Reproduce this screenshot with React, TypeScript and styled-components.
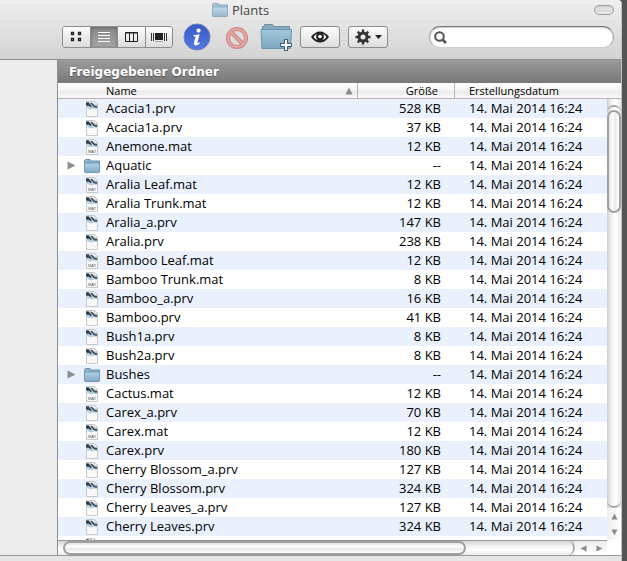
import React from 'react';
import styled, { createGlobalStyle, css } from 'styled-components';

const GlobalStyle = createGlobalStyle`
  * { box-sizing: border-box; }
  body { margin: 0; background: #555; }
  body, button, input { font-family: 'Open Sans', 'Noto Sans', sans-serif; }
`;

const Window = styled.div`
  display: flex;
  flex-direction: column;
  height: 100vh;
  margin-right: 5px;
  background: #ebebeb;
  border-right: 1px solid #c4c4c4;
  border-top-right-radius: 4px;
  overflow: hidden;
  color: #000;
`;

const Header = styled.header`
  flex: none;
  padding: 0 7px 7px 0;
  background: linear-gradient(#efefef, #d3d3d3);
  border-bottom: 1px solid #8e8e8e;
`;

const TitleBar = styled.div`
  display: flex;
  align-items: center;
  justify-content: space-between;
  height: 20px;
  padding-left: 212px;
`;

const Title = styled.h1`
  display: flex;
  align-items: center;
  gap: 4px;
  margin: 0;
  font-size: 13px;
  line-height: 18px;
  font-weight: 400;
  color: #444;
  svg { opacity: 0.75; }
`;

const ToolbarPill = styled.button`
  width: 20px;
  height: 10px;
  padding: 0;
  border: 1px solid #9a9a9a;
  border-radius: 5px;
  background: linear-gradient(#d2d2d2, #e4e4e4 50%, #d8d8d8 55%, #eee);
`;

const Toolbar = styled.div`
  display: flex;
  align-items: center;
  height: 32px;
  padding: 2px 0 0 62px;
`;

const buttonFace = css`
  display: flex;
  align-items: center;
  justify-content: center;
  padding: 0;
  color: #222;
  background: linear-gradient(#fcfcfc, #dcdcdc);
`;

const Segments = styled.div`
  display: flex;
  flex: none;
  width: 111px;
  height: 22px;
  border: 1px solid #8d8d8d;
  border-radius: 3px;
  overflow: hidden;
  margin-right: 10px;
`;

const Segment = styled.button<{ $active?: boolean }>`
  ${buttonFace}
  flex: 1;
  border: 0;
  & + & { border-left: 1px solid #8d8d8d; }
  ${(p) => p.$active && css`
    color: #fff;
    background: linear-gradient(#868686, #a4a4a4);
    box-shadow: inset 0 1px 3px #666;
  `}
`;

const IconButton = styled.button<{ $gap: number }>`
  display: flex;
  flex: none;
  padding: 0;
  border: 0;
  background: none;
  margin-right: ${(p) => p.$gap}px;
`;

const PushButton = styled.button`
  ${buttonFace}
  flex: none;
  gap: 4px;
  width: 40px;
  height: 22px;
  margin-right: 8px;
  border: 1px solid #8d8d8d;
  border-radius: 3px;
`;

const Search = styled.label`
  display: flex;
  align-items: center;
  flex: 1;
  gap: 4px;
  min-width: 0;
  height: 22px;
  margin-left: 33px;
  padding: 0 8px 0 4px;
  background: #fff;
  border: 1px solid #aaa;
  border-top-color: #777;
  border-bottom-color: #d0d0d0;
  border-radius: 11px;
  box-shadow: inset 0 1px 1px #ccc;
`;

const SearchInput = styled.input`
  flex: 1;
  width: 0;
  min-width: 0;
  border: 0;
  outline: 0;
  background: none;
  font-size: 12px;
`;

const Body = styled.div`
  display: flex;
  flex: 1;
  min-height: 0;
  border-bottom: 1px solid #999;
`;

const Sidebar = styled.aside`
  flex: none;
  width: 58px;
  background: #ececec;
  border-right: 1px solid #8f8f8f;
`;

const Main = styled.main`
  display: flex;
  flex-direction: column;
  flex: 1;
  min-width: 0;
`;

const Banner = styled.h2`
  flex: none;
  margin: 0;
  padding: 1px 11px 0;
  font-family: 'DejaVu Sans', 'Noto Sans', sans-serif;
  font-size: 12px;
  line-height: 22px;
  font-weight: 700;
  color: #fff;
  text-shadow: 0 1px 1px #555;
  background: linear-gradient(#9a9a9a, #787878);
`;

const Listing = styled.div`
  display: grid;
  flex: 1;
  min-height: 0;
  grid-template-columns: minmax(0, 1fr) 14px;
  grid-template-rows: minmax(0, 1fr) 15px;
`;

const TableArea = styled.div`
  overflow: hidden;
  background: #fff;
`;

const Table = styled.table`
  width: 100%;
  table-layout: fixed;
  border-collapse: separate;
  border-spacing: 0;
  font-size: 13px;
  line-height: 19px;
`;

const NameCol = styled.col``;
const SizeCol = styled.col`width: 97px;`;
const DateCol = styled.col`width: 153px;`;

const headFace = css`
  height: 16px;
  background: linear-gradient(#fff, #f4f4f4 50%, #eaeaea 55%, #fafafa);
  border-bottom: 1px solid #b4b4b4;
`;

const Th = styled.th<{ $align?: 'right'; $left: number; $right: number }>`
  ${headFace}
  padding: 0 ${(p) => p.$right}px 0 ${(p) => p.$left}px;
  font-size: 11px;
  line-height: 15px;
  font-weight: 400;
  text-align: ${(p) => p.$align ?? 'left'};
  & + & { border-left: 1px solid #b4b4b4; }
`;

const ThInner = styled.div`
  display: flex;
  align-items: center;
  justify-content: space-between;
`;

const HeadFiller = styled.div`
  flex: none;
  ${headFace}
`;

const Row = styled.tr`
  &:nth-child(odd) { background: #eaf1fd; }
`;

const Td = styled.td`
  height: 19px;
  padding: 0 0 0 15px;
  white-space: nowrap;
`;

const NameTd = styled(Td)`padding: 0 0 0 8px;`;
const SizeTd = styled(Td)`
  padding: 0 13px 0 0;
  text-align: right;
`;

const NameCell = styled.div`
  display: grid;
  grid-template-columns: 10px 16px 1fr;
  column-gap: 8px;
  align-items: center;
  justify-items: center;
  height: 19px;
`;

const FileName = styled.span`
  justify-self: start;
  margin-left: -2px;
`;

const Disclosure = styled.button`
  display: flex;
  padding: 0;
  border: 0;
  background: none;
`;

const VBar = styled.div`
  display: flex;
  flex-direction: column;
  min-height: 0;
`;

const VTrack = styled.div`
  flex: 1;
  min-height: 0;
  padding-top: 6px;
  background: linear-gradient(90deg, #cfcfcf, #f0f0f0 30%, #fff 60%, #e8e8e8);
`;

const VWell = styled.div`
  height: 100%;
  border: 0 solid #aaa;
  border-top: 2px solid #aaa;
  border-bottom: 2px solid #aaa;
  border-radius: 7px;
  padding-top: 3px;
`;

const VThumb = styled.div`
  height: 103px;
  border: 2px solid #a0a0a0;
  border-radius: 7px;
  background: linear-gradient(90deg, #e2e2e2, #fff 35%, #e9e9e9 60%, #fff);
`;

const VArrows = styled.div`
  display: flex;
  flex: none;
  flex-direction: column;
  background: linear-gradient(90deg, #eee, #fff);
`;

const HBar = styled.div`
  display: flex;
  border-top: 1px solid #999;
  background: linear-gradient(#d4d4d4, #f3f3f3 35%, #fff 65%, #ececec);
`;

const HWell = styled.div`
  flex: 1;
  margin-left: 5px;
  border-right: 2px solid #aaa;
  border-radius: 7px;
`;

const HThumb = styled.div`
  width: 79%;
  height: 14px;
  border: 2px solid #a0a0a0;
  border-radius: 7px;
  background: linear-gradient(#e4e4e4, #fff 35%, #e9e9e9 60%, #fff);
`;

const HArrows = styled.div`
  display: flex;
  flex: none;
  background: linear-gradient(#eee, #fff);
`;

const Arrow = styled.button<{ $w: number; $h: number }>`
  display: flex;
  align-items: center;
  justify-content: center;
  width: ${(p) => p.$w}px;
  height: ${(p) => p.$h}px;
  padding: 0;
  border: 0;
  background: none;
`;

const Corner = styled.div`background: #fff;`;

const Footer = styled.footer`
  flex: none;
  height: 5px;
  background: #e6e6e6;
`;

type Direction = 'up' | 'down' | 'left' | 'right';
const TRIANGLES: Record<Direction, string> = {
  up: 'M4 0.5L7.5 7.5H0.5Z',
  down: 'M4 7.5L0.5 0.5H7.5Z',
  left: 'M0.5 4L7.5 0.5V7.5Z',
  right: 'M7.5 4L0.5 0.5V7.5Z',
};

function Triangle({ dir, size = 8 }: { dir: Direction; size?: number }) {
  return (
    <svg width={size} height={size} viewBox="0 0 8 8" aria-hidden="true">
      <path d={TRIANGLES[dir]} fill="#8c8c8c" />
    </svg>
  );
}

function FolderIcon() {
  return (
    <svg width="16" height="14" viewBox="0 0 16 14" aria-hidden="true">
      <defs>
        <linearGradient id="folder" x1="0" y1="0" x2="0" y2="1">
          <stop offset="0" stopColor="#b4d3e6" />
          <stop offset="1" stopColor="#7fa9c6" />
        </linearGradient>
      </defs>
      <path d="M0.5 12.5V1.5L1.5 0.5H6L7 2H15.5V12.5Z" fill="#8fb4cc" stroke="#6c93ae" />
      <path d="M0.5 4H15.5V12.5L15 13.5H1L0.5 12.5Z" fill="url(#folder)" stroke="#7099b5" />
    </svg>
  );
}

function FileIcon({ material }: { material: boolean }) {
  return (
    <svg width="12" height="16" viewBox="0 0 12 16" aria-hidden="true">
      <path d="M0.5 0.5H8.5L11.5 3.5V15.5H0.5Z" fill="#f9f9f9" stroke="#c9c9c9" />
      <path d="M1 4L4 5L7 6L11 5V8L8 7.5L5 8.5L1 7Z" fill="#b7cedb" />
      <path d="M0 1.5L2.5 1.2L4.5 3.5L6 5.5L4.5 6L3 4.8L1.5 5L0 4Z" fill="#2a3f4f" />
      <path d="M4 1.5L6.5 2L8.5 4.5L11 4.8L11.5 6.5L9.5 6.8L7.5 6L6 4.5Z" fill="#3a5262" />
      <path d="M8.5 0.5V3.5H11.5Z" fill="#fff" stroke="#bbb" strokeWidth="0.6" />
      {material && (
        <text x="6" y="14" fontSize="4" fontFamily="Liberation Sans, sans-serif" fontWeight="400" textAnchor="middle" fill="#555">MAT</text>
      )}
    </svg>
  );
}

function GridIcon() {
  return (
    <svg width="12" height="12" viewBox="0 0 12 12" fill="none" stroke="currentColor" aria-hidden="true">
      <path d="M1.5 1.5h2v2h-2zM8.5 1.5h2v2h-2zM1.5 7.5h2v2h-2zM8.5 7.5h2v2h-2z" strokeWidth="1.3" />
    </svg>
  );
}

function ListIcon() {
  return (
    <svg width="12" height="12" viewBox="0 0 12 12" stroke="currentColor" aria-hidden="true">
      <path d="M0 1.5H12M0 4.5H12M0 7.5H12M0 10.5H12" />
    </svg>
  );
}

function ColumnsIcon() {
  return (
    <svg width="13" height="11" viewBox="0 0 13 11" fill="none" stroke="currentColor" aria-hidden="true">
      <path d="M0.5 0.5H12.5V9.5H0.5ZM4.5 0V10M8.5 0V10M0 1H13" />
    </svg>
  );
}

function CoverIcon() {
  return (
    <svg width="16" height="10" viewBox="0 0 16 10" aria-hidden="true">
      <path d="M0.5 1V9M2.5 1V9M13.5 1V9M15.5 1V9" stroke="#333" />
      <rect x="4" y="1" width="8" height="7" fill="#222" />
      <path d="M4 9.5H12" stroke="#aaa" />
    </svg>
  );
}

function InfoIcon() {
  return (
    <svg width="28" height="28" viewBox="0 0 28 28" aria-hidden="true">
      <defs>
        <linearGradient id="info" x1="0" y1="0" x2="0" y2="1">
          <stop offset="0" stopColor="#3659c6" />
          <stop offset="1" stopColor="#5778e0" />
        </linearGradient>
      </defs>
      <circle cx="14" cy="14" r="13" fill="url(#info)" stroke="#6b80c4" />
      <circle cx="15.6" cy="7.6" r="2.1" fill="#fff" />
      <path d="M10.5 12.2L16.6 11.2L14.4 19.6Q14.2 20.8 16.8 19.2L17.2 20Q14.8 22.6 12.4 22.4Q10.4 22 11 19.6L12.6 13.4L10.4 13.2Z" fill="#fff" />
    </svg>
  );
}

function ForbidIcon() {
  return (
    <svg width="24" height="24" viewBox="0 0 24 24" fill="none" aria-hidden="true">
      <circle cx="12" cy="13" r="9" stroke="#c67f7d" strokeWidth="4" />
      <path d="M6 7L18 19" stroke="#c67f7d" strokeWidth="4" />
      <path d="M5.5 6.5L18.5 19.5" stroke="#e4a5a1" strokeWidth="2.4" />
      <circle cx="12" cy="13" r="9" stroke="#e4a5a1" strokeWidth="2.4" />
    </svg>
  );
}

function NewFolderIcon() {
  return (
    <svg width="33" height="28" viewBox="0 0 33 28" aria-hidden="true">
      <defs>
        <linearGradient id="newFolder" x1="0" y1="0" x2="0" y2="1">
          <stop offset="0" stopColor="#a5c8dc" />
          <stop offset="1" stopColor="#7ba5c0" />
        </linearGradient>
      </defs>
      <path d="M2.5 6V3.5H4.5V1.5H12.5L14 3.5H29.5V6" fill="#86abc1" stroke="#6b8fa5" />
      <path d="M1 6.5H31.5L30.5 25.5H2Z" fill="url(#newFolder)" stroke="#6d95ae" />
      <path d="M24.5 16.5H27.5V20.5H31.5V23.5H27.5V27.5H24.5V23.5H20.5V20.5H24.5Z" fill="#fff" stroke="#35566f" />
    </svg>
  );
}

function EyeIcon() {
  return (
    <svg width="18" height="12" viewBox="0 0 18 12" aria-hidden="true">
      <path d="M0 6Q4 0.5 9 0.5T18 6Q14 11.5 9 11.5T0 6Z" fill="#222" />
      <path d="M2.5 6Q4 3.5 6 2.8Q4 6 6.5 9Q4 8.3 2.5 6ZM15.5 6Q14 3.5 12 2.8Q14 6 11.5 9Q14 8.3 15.5 6Z" fill="#eee" />
      <circle cx="9" cy="5.5" r="1.8" fill="#fff" />
    </svg>
  );
}

function GearIcon() {
  return (
    <svg width="16" height="16" viewBox="0 0 16 16" fill="none" stroke="#333" aria-hidden="true">
      <circle cx="8" cy="8" r="4" strokeWidth="3" />
      <path d="M8 0.5V3M8 13V15.5M0.5 8H3M13 8H15.5M2.7 2.7L4.5 4.5M11.5 11.5L13.3 13.3M2.7 13.3L4.5 11.5M11.5 4.5L13.3 2.7" strokeWidth="2.4" />
    </svg>
  );
}

function CaretIcon() {
  return (
    <svg width="7" height="4" viewBox="0 0 7 4" aria-hidden="true"><path d="M0 0H7L3.5 4Z" fill="#222" /></svg>
  );
}

function SearchIcon() {
  return (
    <svg width="13" height="13" viewBox="0 0 13 13" fill="none" stroke="#555" aria-hidden="true">
      <circle cx="5.5" cy="5.5" r="4.3" strokeWidth="2" />
      <path d="M8.5 8.5L12 12" strokeWidth="2.6" />
    </svg>
  );
}

const DATE = '14. Mai 2014 16:24';

const FILES: [string, string][] = [
  ['Acacia1.prv', '528 KB'],
  ['Acacia1a.prv', '37 KB'],
  ['Anemone.mat', '12 KB'],
  ['Aquatic', '--'],
  ['Aralia Leaf.mat', '12 KB'],
  ['Aralia Trunk.mat', '12 KB'],
  ['Aralia_a.prv', '147 KB'],
  ['Aralia.prv', '238 KB'],
  ['Bamboo Leaf.mat', '12 KB'],
  ['Bamboo Trunk.mat', '8 KB'],
  ['Bamboo_a.prv', '16 KB'],
  ['Bamboo.prv', '41 KB'],
  ['Bush1a.prv', '8 KB'],
  ['Bush2a.prv', '8 KB'],
  ['Bushes', '--'],
  ['Cactus.mat', '12 KB'],
  ['Carex_a.prv', '70 KB'],
  ['Carex.mat', '12 KB'],
  ['Carex.prv', '180 KB'],
  ['Cherry Blossom_a.prv', '127 KB'],
  ['Cherry Blossom.prv', '324 KB'],
  ['Cherry Leaves_a.prv', '127 KB'],
  ['Cherry Leaves.prv', '324 KB'],
  ['', ''],
];

function FileRow({ name, size }: { name: string; size: string }) {
  const folder = size === '--';
  return (
    <Row>
      <NameTd>
        <NameCell>
          {folder ? (
            <Disclosure aria-label={`${name} öffnen`}><Triangle dir="right" size={9} /></Disclosure>
          ) : <span />}
          {folder ? <FolderIcon /> : <FileIcon material={name.endsWith('.mat')} />}
          <FileName>{name}</FileName>
        </NameCell>
      </NameTd>
      <SizeTd>{size}</SizeTd>
      <Td>{name && DATE}</Td>
    </Row>
  );
}

export default function App() {
  return (
    <>
      <GlobalStyle />
      <Window>
        <Header>
          <TitleBar>
            <Title><FolderIcon />Plants</Title>
            <ToolbarPill aria-label="Symbolleiste" />
          </TitleBar>
          <Toolbar>
            <Segments>
              <Segment aria-label="Symbole"><GridIcon /></Segment>
              <Segment aria-label="Liste" $active><ListIcon /></Segment>
              <Segment aria-label="Spalten"><ColumnsIcon /></Segment>
              <Segment aria-label="Cover Flow"><CoverIcon /></Segment>
            </Segments>
            <IconButton aria-label="Informationen" $gap={14}><InfoIcon /></IconButton>
            <IconButton aria-label="Löschen" $gap={11}><ForbidIcon /></IconButton>
            <IconButton aria-label="Neuer Ordner" $gap={7}><NewFolderIcon /></IconButton>
            <PushButton aria-label="Übersicht"><EyeIcon /></PushButton>
            <PushButton aria-label="Aktionen"><GearIcon /><CaretIcon /></PushButton>
            <Search>
              <SearchIcon />
              <SearchInput type="text" aria-label="Suchen" />
            </Search>
          </Toolbar>
        </Header>
        <Body>
          <Sidebar />
          <Main>
            <Banner>Freigegebener Ordner</Banner>
            <Listing>
              <TableArea>
                <Table>
                  <colgroup><NameCol /><SizeCol /><DateCol /></colgroup>
                  <thead>
                    <tr>
                      <Th $left={48} $right={4}>
                        <ThInner>Name<Triangle dir="up" /></ThInner>
                      </Th>
                      <Th $align="right" $left={4} $right={16}>Größe</Th>
                      <Th $left={14} $right={4}>Erstellungsdatum</Th>
                    </tr>
                  </thead>
                  <tbody>
                    {FILES.map(([name, size]) => <FileRow key={name} name={name} size={size} />)}
                  </tbody>
                </Table>
              </TableArea>
              <VBar>
                <HeadFiller />
                <VTrack><VWell><VThumb /></VWell></VTrack>
                <VArrows>
                  <Arrow $w={14} $h={16} aria-label="Nach oben"><Triangle dir="up" size={7} /></Arrow>
                  <Arrow $w={14} $h={16} aria-label="Nach unten"><Triangle dir="down" size={7} /></Arrow>
                </VArrows>
              </VBar>
              <HBar>
                <HWell><HThumb /></HWell>
                <HArrows>
                  <Arrow $w={16} $h={14} aria-label="Nach links"><Triangle dir="left" size={7} /></Arrow>
                  <Arrow $w={16} $h={14} aria-label="Nach rechts"><Triangle dir="right" size={7} /></Arrow>
                </HArrows>
              </HBar>
              <Corner />
            </Listing>
          </Main>
        </Body>
        <Footer />
      </Window>
    </>
  );
}
